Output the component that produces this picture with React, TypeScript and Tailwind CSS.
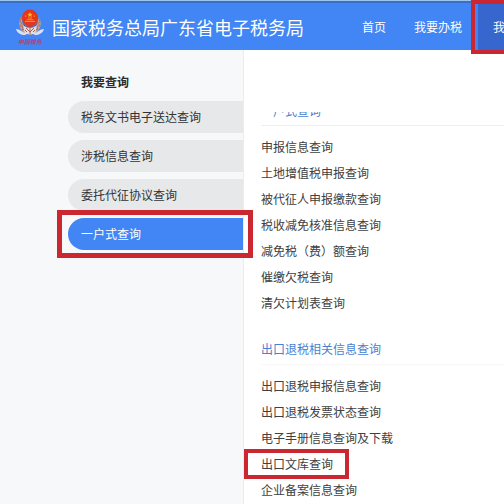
type NavItem = { label: string; active?: boolean }

const sideItems: NavItem[] = [
  { label: "税务文书电子送达查询" },
  { label: "涉税信息查询" },
  { label: "委托代征协议查询" },
  { label: "一户式查询", active: true },
]

const declareLinks = [
  "申报信息查询",
  "土地增值税申报查询",
  "被代征人申报缴款查询",
  "税收减免核准信息查询",
  "减免税（费）额查询",
  "催缴欠税查询",
  "清欠计划表查询",
]

const exportLinks = [
  "出口退税申报信息查询",
  "出口退税发票状态查询",
  "电子手册信息查询及下载",
  "出口文库查询",
  "企业备案信息查询",
]

const highlighted = "出口文库查询"

function Emblem() {
  return (
    <svg viewBox="0 0 28 36" className="h-9 w-7 shrink-0" role="img" aria-label="中国税务">
      {/* wreath */}
      <path d="M5 8C2 13 3 20 8 24l6 2 6-2c5-4 6-11 3-16l-3 12H8z" fill="#c9a491" />
      <path d="M5 9l-1 4 2 1-2 3 3 0-1 4 3-1M23 9l1 4-2 1 2 3-3 0 1 4-3-1" fill="none" stroke="#a87467" strokeWidth="1" />
      {/* national emblem */}
      <ellipse cx="14" cy="9" rx="8" ry="8.500" fill="#e5351a" />
      <path d="M6 10a8 8 0 0 0 16 0l-2 7H8z" fill="#c62f1c" />
      <path d="M14 3l.8 1.800 2 .1-1.500 1.200.5 1.900-1.800-1-1.800 1 .5-1.900-1.500-1.200 2-.1z" fill="#f6b52c" />
      <path d="M9 6.500h1.300v1.300H9zM17.700 6.500H19v1.300h-1.300zM12 8.500h4v1h-4zM10.500 10.300h7v1h-7zM9 12h10v1H9z" fill="#f0942a" />
      {/* ribbon */}
      <path d="M0 20c4 0 6 3 9 4l5-4 5 4c3-1 5-4 9-4-1 4-5 6-9 6l-5-3-5 3c-4 0-8-2-9-6z" fill="#dcdff0" />
      <path d="M7 16c2 2 4 3 7 3s5-1 7-3l-2 9H9z" fill="#e9dbd9" />
      <path d="M10 19l4 4 4-4M14 17v8M11 23l-2-2M17 23l2-2" fill="none" stroke="#a95e56" strokeWidth="1" />
      <text x="14" y="35" textAnchor="middle" fontSize="6" fontStyle="italic" fontWeight="700" fill="#a8487c" fontFamily="Noto Sans CJK SC, sans-serif">
        中国税务
      </text>
    </svg>
  )
}

function Header() {
  return (
    <header className="border-t border-[#9cc4ee]">
      <div className="flex h-[49px] items-stretch border-t-2 border-[#3a70c4] bg-[#4285f4] pl-4 text-white">
        <div className="flex items-center gap-2">
          <Emblem />
          <h1 className="whitespace-nowrap text-[18px] leading-6">国家税务总局广东省电子税务局</h1>
        </div>
        <nav className="ml-[42px] flex min-w-0 flex-1 items-stretch whitespace-nowrap">
          <a href="#home" className="flex items-center px-4">首页</a>
          <a href="#tax" className="flex items-center px-3">我要办税</a>
          <div className="relative flex min-w-0 flex-1 pl-1">
            <a href="#query" className="flex min-w-0 flex-1 items-center overflow-hidden bg-[#3766cf] pl-[15px]">我要查询</a>
            <span className="pointer-events-none absolute -top-[3px] -right-1 -bottom-1 -left-[3px] border-4 border-[#cb2730]" />
          </div>
        </nav>
      </div>
    </header>
  )
}

function Sidebar() {
  return (
    <aside className="w-[244px] shrink-0 border-r border-[#e9edf0] bg-[#f7f8fa] pl-[68px]">
      <h2 className="pt-5 pb-[7px] pl-[13px] font-bold leading-6 text-[#2b2b2b]">我要查询</h2>
      <ul className="flex flex-col gap-[7px]">
        {sideItems.map((item) => (
          <li key={item.label} className="relative">
            <a
              href="#side"
              className={
                item.active
                  ? "flex h-8 items-center rounded-l-full bg-[#4285f4] pl-[13px] text-white"
                  : "flex h-8 items-center rounded-l-full bg-[#e7e8e9] pl-[13px] text-[#333333]"
              }
            >
              {item.label}
            </a>
            {item.active && (
              <span className="pointer-events-none absolute -top-2 -right-2.5 -bottom-2 -left-[11px] border-5 border-[#cb2730]" />
            )}
          </li>
        ))}
      </ul>
    </aside>
  )
}

function LinkList({ links }: { links: string[] }) {
  return (
    <ul className="text-[#404040]">
      {links.map((link) => (
        <li key={link} className="flex h-[26px] items-center">
          <a href="#link" className="relative">
            {link}
            {link === highlighted && (
              <span className="pointer-events-none absolute -top-1.5 -right-4 -bottom-1.5 -left-[17px] border-4 border-[#cb2730]" />
            )}
          </a>
        </li>
      ))}
    </ul>
  )
}

export default function App() {
  return (
    <div className="flex min-h-screen flex-col overflow-hidden bg-white font-['Noto_Sans_CJK_SC',sans-serif] text-[12px] leading-[18px]">
      <Header />
      <div className="flex flex-1">
        <Sidebar />
        <main className="min-w-0 flex-1 pt-[62px] pl-[17px]">
          {/* heading scrolled half out of view */}
          <div className="mb-2 flex h-[14px] items-start border-b border-[#eeeeee]">
            <div className="flex h-2 items-end overflow-hidden">
              <h3 className="text-[#4a7fd0]">一户式查询</h3>
            </div>
          </div>
          <LinkList links={declareLinks} />
          <h3 className="mt-4 mb-2 border-b border-[#f7f7f7] pt-2 pb-1.5 text-[#4a7fd0]">出口退税相关信息查询</h3>
          <LinkList links={exportLinks} />
        </main>
      </div>
    </div>
  )
}
